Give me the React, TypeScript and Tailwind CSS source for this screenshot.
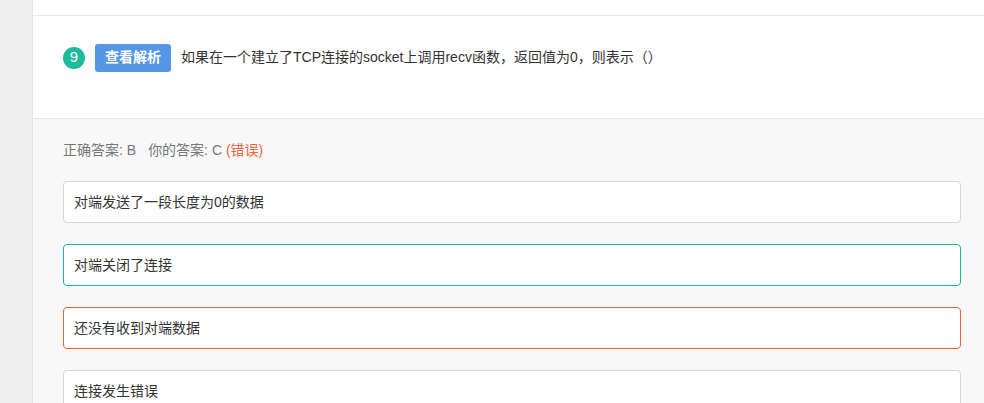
export default function App() {
  const options = [
    { text: "对端发送了一段长度为0的数据", state: "none" },
    { text: "对端关闭了连接", state: "right" },
    { text: "还没有收到对端数据", state: "wrong" },
    { text: "连接发生错误", state: "none" },
  ];

  return (
    <div
      className="flex h-[403px] w-[984px] overflow-hidden bg-[#ededed]"
      style={{ fontFamily: '"Liberation Sans", "Noto Sans CJK SC", sans-serif' }}
    >
      <div className="w-[32px] shrink-0" />
      <div className="flex flex-1 flex-col border-l border-[#e3e3e3] bg-white">
        {/* top strip */}
        <div className="h-[16px] shrink-0 border-b border-[#e8e8e8]" />

        {/* question */}
        <div className="flex h-[103px] shrink-0 items-center border-b border-[#e8e8e8] pb-[19px] pl-[30px]">
          <span className="flex h-[22px] w-[22px] items-center justify-center rounded-full bg-[#1abc9c] text-[15px] text-white">
            9
          </span>
          <button className="ml-[10px] h-[28px] rounded-[3px] bg-[#5596e6] px-[10px] text-[14px] font-bold text-white">
            查看解析
          </button>
          <span className="ml-[10px] text-[14px] text-[#333]">
            如果在一个建立了TCP连接的socket上调用recv函数，返回值为0，则表示（）
          </span>
        </div>

        {/* answers */}
        <div className="flex-1 bg-[#f8f8f8] pl-[30px] pr-[23px] pt-[21px]">
          <div className="text-[14px] leading-[20px] text-[#777]">
            正确答案: B<span className="ml-[12px]">你的答案: C</span>{" "}
            <span className="text-[#f0643c]">(错误)</span>
          </div>

          <div className="mt-[21px] flex flex-col gap-[21px]">
            {options.map((o, i) => (
              <div
                key={i}
                className={
                  "flex h-[42px] items-center rounded-[4px] border bg-white px-[10px] text-[14px] text-[#333] " +
                  (o.state === "right"
                    ? "border-[#1abc9c]"
                    : o.state === "wrong"
                      ? "border-[#f0643c]"
                      : "border-[#d6d6d6]")
                }
              >
                {o.text}
              </div>
            ))}
          </div>
        </div>
      </div>
    </div>
  );
}
